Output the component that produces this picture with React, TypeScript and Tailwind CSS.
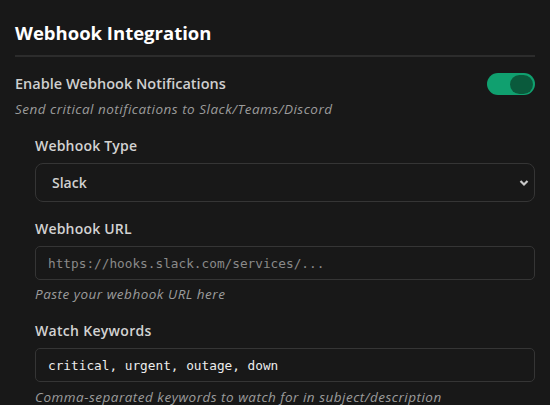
import React, { useState } from 'react';

const sans = "font-['Open_Sans','Noto_Sans',sans-serif]";
const mono = "font-['DejaVu_Sans_Mono','Liberation_Mono',monospace]";

export default function App() {
  const [enabled, setEnabled] = useState(true);
  const [type, setType] = useState('slack');
  const [url, setUrl] = useState('');
  const [keywords, setKeywords] = useState('critical, urgent, outage, down');

  return (
    <div className={`min-h-[405px] w-[550px] overflow-hidden bg-[#181818] px-[15px] pt-[20px] ${sans}`}>
      {/* Section header */}
      <h2 className="text-[18.5px] font-bold leading-[26px] text-white">Webhook Integration</h2>
      <div className="mt-[9px] h-[2px] bg-[#2c2c2c]" />

      {/* Enable toggle */}
      <div className="mt-[16px] flex items-center justify-between">
        <span className="text-[14.5px] font-semibold text-[#cfcfcf]">Enable Webhook Notifications</span>
        <button
          onClick={() => setEnabled(!enabled)}
          className={`flex h-[22px] w-[48px] items-center rounded-full px-[2px] ${
            enabled ? 'justify-end bg-[#10a06f]' : 'justify-start bg-[#3a3a3a]'
          }`}
        >
          <span className="h-[19px] w-[23px] rounded-full bg-[#0a5a3c]" />
        </button>
      </div>
      <p className="mt-[4px] text-[13.5px] italic leading-[20px] tracking-[0.5px] text-[#9c9c9c]">
        Send critical notifications to Slack/Teams/Discord
      </p>

      {/* Nested settings */}
      <div className="ml-[20px] mt-[16px] flex flex-col">
        <label className="text-[14px] font-semibold tracking-[0.2px] text-[#d2d2d2]">Webhook Type</label>
        <div className="relative mt-[7px]">
          <select
            value={type}
            onChange={e => setType(e.target.value)}
            className="h-[39px] w-full appearance-none rounded-[8px] border border-[#353535] bg-[#181818] px-[16px] text-[14px] font-semibold text-[#d0d0d0] outline-none"
          >
            <option value="slack">Slack</option>
            <option value="teams">Microsoft Teams</option>
            <option value="discord">Discord</option>
          </select>
          <svg
            className="pointer-events-none absolute right-[6px] top-[16px] h-[8px] w-[10px] text-[#c8c8c8]"
            viewBox="0 0 10 8"
            fill="none"
            stroke="currentColor"
            strokeWidth="2.2"
          >
            <path d="M1.5 2l3.5 3.5L8.5 2" />
          </svg>
        </div>

        <label className="mt-[16px] text-[14px] font-semibold tracking-[0.2px] text-[#d2d2d2]">Webhook URL</label>
        <input
          value={url}
          onChange={e => setUrl(e.target.value)}
          placeholder="https://hooks.slack.com/services/..."
          className={`mt-[7px] h-[34px] w-full rounded-[5px] border border-[#353535] bg-[#181818] px-[12px] text-[12.75px] text-[#e6e6e6] outline-none placeholder:text-[#8a8a8a] ${mono}`}
        />
        <p className="mt-[4px] text-[13.5px] italic leading-[20px] tracking-[0.5px] text-[#9c9c9c]">
          Paste your webhook URL here
        </p>

        <label className="mt-[16px] text-[14px] font-semibold tracking-[0.3px] text-[#d2d2d2]">Watch Keywords</label>
        <input
          value={keywords}
          onChange={e => setKeywords(e.target.value)}
          className={`mt-[7px] h-[34px] w-full rounded-[5px] border border-[#353535] bg-[#181818] px-[12px] text-[12.75px] text-[#ececec] outline-none ${mono}`}
        />
        <p className="mt-[5px] whitespace-nowrap text-[13.5px] italic leading-[20px] tracking-[0.5px] text-[#9c9c9c]">
          Comma-separated keywords to watch for in subject/description
        </p>
      </div>
    </div>
  );
}
